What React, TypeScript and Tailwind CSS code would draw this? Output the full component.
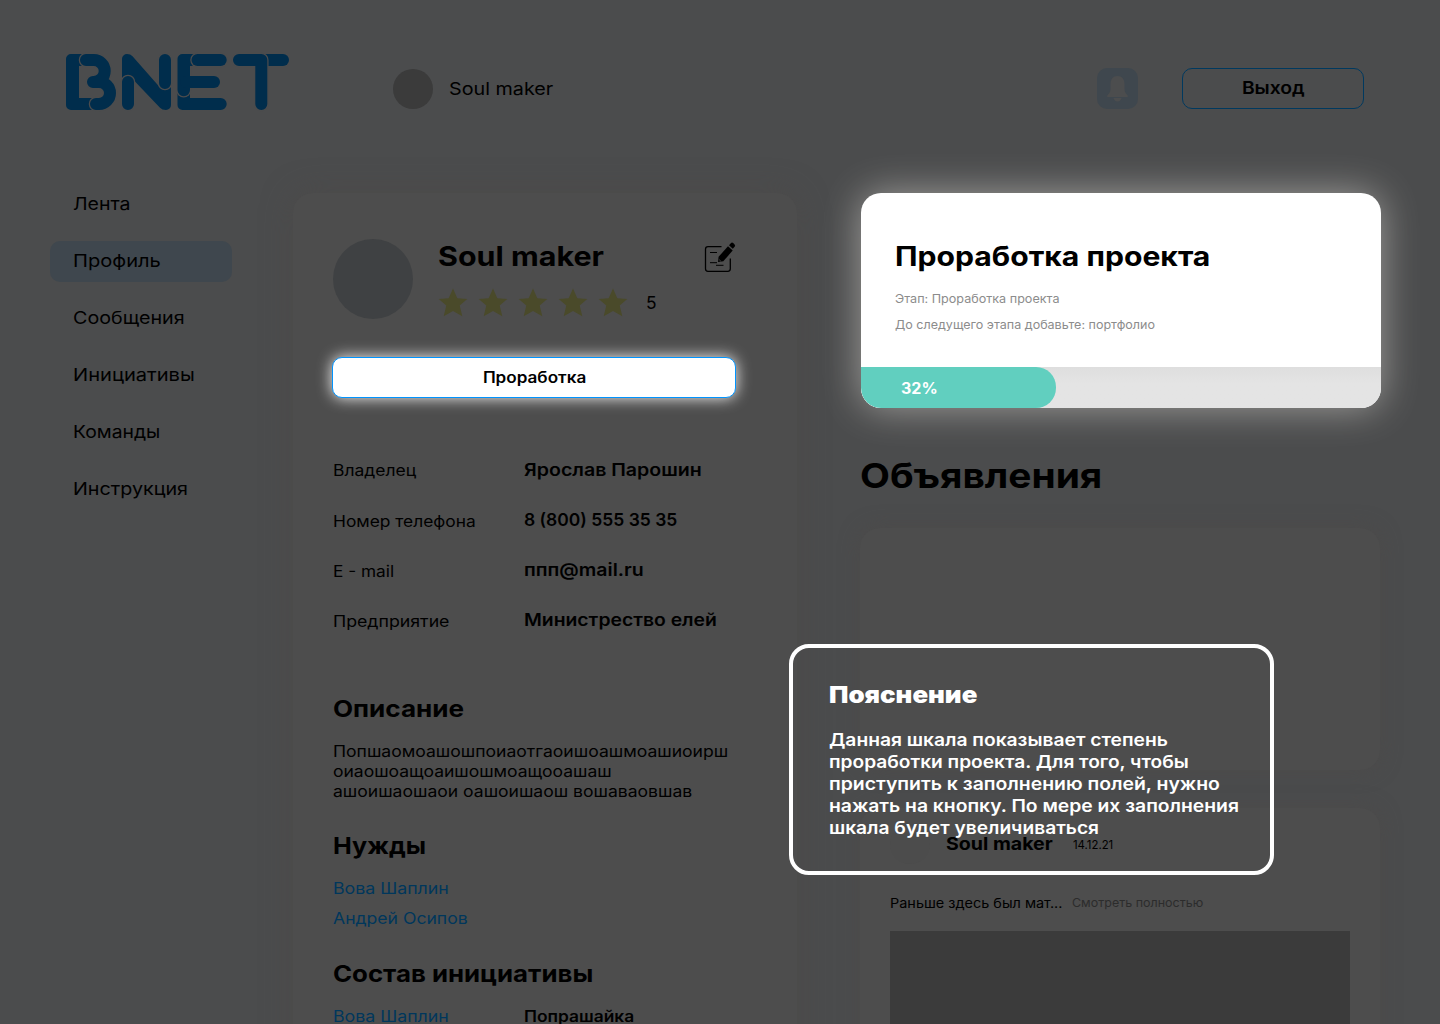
import type { ReactNode } from "react";

const INK = "#002d4c";
const PAGE = "#4b4c4d";

function Logo() {
  return (
    <svg className="block h-[60px] w-[228px]" viewBox="64 52 228 60" fill="none" strokeLinecap="round" strokeLinejoin="round">
      <path d="M71 54H84V66H79V98H96V110H71a5 5 0 0 1-5-5V59a5 5 0 0 1 5-5z" fill={INK} />
      <path d="M86 60H93.7a11 11 0 0 1 0 22H93M96 104H99a11 11 0 0 0 0-22H93" stroke={PAGE} strokeWidth="14.500" />
      <path d="M86 60H93.7a11 11 0 0 1 0 22H93M96 104H99a11 11 0 0 0 0-22H93" stroke={INK} strokeWidth="12" />

      <path d="M122 59a5 5 0 0 1 5-5q3.500 0 5.500 2.300L160 87.500L171 87V105a5 5 0 0 1-5 5q-4 0-6-2.300L134 80.500L122 82z" fill={INK} />
      <path d="M128 82V104M165 60V83" stroke={PAGE} strokeWidth="14.500" />
      <path d="M128 82V104M165 60V83" stroke={INK} strokeWidth="12" />

      <path d="M177.500 92V105a5 5 0 0 0 5 5H220.700a6 6 0 0 0 0-12H190V92z" fill={INK} />
      <path d="M183.700 62V90" stroke={PAGE} strokeWidth="15" />
      <path d="M171 54h2v56h-2z" fill="none" />
      <path d="M182.500 54H197V66H190V90a6.200 6.200 0 0 1-12.500 0V59a5 5 0 0 1 5-5z" fill={INK} />
      <path d="M186 82H214" stroke={INK} strokeWidth="12" />
      <path d="M197.500 60H220.700" stroke={PAGE} strokeWidth="14.500" />
      <path d="M197.500 60H220.700" stroke={INK} strokeWidth="12" />

      <path d="M263 60H283" stroke={INK} strokeWidth="12" />
      <path d="M239 60H261.300V104" stroke={PAGE} strokeWidth="14.500" />
      <path d="M239 60H261.300V104" stroke={INK} strokeWidth="12" />
    </svg>
  );
}

function Bell() {
  return (
    <svg className="h-[26px] w-[22px]" viewBox="0.500 1 22 26" fill="#4c4d4e">
      <path d="M11 1C6.500 1 4 4.500 4 9v5c0 3-1.500 4.500-3.200 6.600C.2 21.500.6 22 1.500 22h19c.9 0 1.300-.5.700-1.400C19.500 18.500 18 17 18 14V9c0-4.500-2.500-8-7-8z" />
      <path d="M7 23h8c-.4 2-2 3.500-4 3.500S7.400 25 7 23z" />
    </svg>
  );
}

function EditIcon() {
  return (
    <svg className="block h-8 w-8" viewBox="704 241 32 32" fill="none">
      <path d="M721.500 246.700H708a2.500 2.500 0 0 0-2.500 2.500V268.800a2.500 2.500 0 0 0 2.500 2.500H727.800a2.500 2.500 0 0 0 2.500-2.500V258.500" stroke="#000" strokeWidth="1.300" />
      <path d="M710 252.500h7M710 262.700h7M716 265.300h7.500" stroke="#000" strokeWidth="1" />
      <path d="M718.600 256.800L728 246.300L732.700 250.600L723.300 261.200L718 262z" fill="#000" />
      <path d="M729 245.200l1.800-2q1.200-1.200 2.400-.1l1.400 1.400q1.100 1.100 0 2.300l-1.800 2z" fill="#000" />
      <path d="M718.800 259.300l2.200 2" stroke="#4d4d4d" strokeWidth=".7" />
    </svg>
  );
}

function Star() {
  return (
    <svg className="h-8 w-8" viewBox="0 0 32 32" fill="#4a4a2a">
      <path d="M16 1.500L20.300 11.200L30.300 11.900L22.700 18.600L25.300 29.200L16 24L6.700 29.200L9.300 18.600L1.700 11.900L11.700 11.200z" />
    </svg>
  );
}

function Wide({ x, children }: { x: string; children: ReactNode }) {
  return <span className={`inline-block origin-left ${x}`}>{children}</span>;
}

const nav = [
  { label: "Лента", x: "scale-x-[1.12]" },
  { label: "Профиль", x: "scale-x-[1.155]", active: true },
  { label: "Сообщения", x: "scale-x-[1.132]" },
  { label: "Инициативы", x: "scale-x-[1.155]" },
  { label: "Команды", x: "scale-x-[1.11]" },
  { label: "Инструкция", x: "scale-x-[1.133]" },
];

const details = [
  { label: "Владелец", lx: "scale-x-[1.135]", value: "Ярослав Парошин", vx: "scale-x-[1.125]", pt: "pt-[2px]" },
  { label: "Номер телефона", lx: "scale-x-[1.128]", value: "8 (800) 555 35 35", vx: "scale-x-[1.005]", pt: "pt-[3px]" },
  { label: "E - mail", lx: "scale-x-[1.12]", value: "ппп@mail.ru", vx: "scale-x-[1.12]", pt: "pt-[3px]" },
  { label: "Предприятие", lx: "scale-x-[1.152]", value: "Министрество елей", vx: "scale-x-[1.112]", pt: "pt-[3px]" },
];

const hint = [
  { text: "Данная шкала показывает степень", x: "scale-x-[1.105]" },
  { text: "проработки проекта. Для того, чтобы", x: "scale-x-[1.1]" },
  { text: "приступить к заполнению полей, нужно", x: "scale-x-[1.115]" },
  { text: "нажать на кнопку. По мере их заполнения", x: "scale-x-[1.11]" },
  { text: "шкала будет увеличиваться", x: "scale-x-[1.101]" },
];

function Heading({ children, className, x }: { children: ReactNode; className: string; x: string }) {
  return (
    <h2 className={`text-[23.2px] leading-[30px] font-bold ${className}`}>
      <Wide x={x}>{children}</Wide>
    </h2>
  );
}

export default function App() {
  return (
    <div className="relative h-[1024px] w-[1440px] overflow-hidden bg-[#4b4c4d] font-['Inter',sans-serif] whitespace-nowrap text-black">
      <header className="flex h-[193px] items-start">
        <div className="mt-[52px] ml-16">
          <Logo />
        </div>
        <div className="mt-[69px] ml-[101px] flex items-center gap-[15.5px]">
          <div className="size-10 rounded-full bg-[#3b3b3b]" />
          <span className="text-[17.4px] leading-[22px] font-[420]">
            <Wide x="scale-x-[1.135]">Soul maker</Wide>
          </span>
        </div>
        <div className="mt-[68px] mr-[76px] ml-auto flex gap-11">
          <div className="flex size-[41px] items-center justify-center rounded-[10px] bg-[#3f474e]">
            <Bell />
          </div>
          <button className="h-[41px] w-[182px] rounded-[10px] border border-[#00395f] pb-px text-[17.4px] font-semibold">
            <span className="inline-block scale-x-[1.11]">Выход</span>
          </button>
        </div>
      </header>

      <div className="flex items-start">
        <nav className="-mt-[9px] ml-[50px] flex w-[182px] shrink-0 flex-col gap-4">
          {nav.map((n) => (
            <a
              key={n.label}
              className={`flex h-[41px] items-center rounded-[10px] pb-px pl-[22.5px] text-[17.4px] font-[420] ${n.active ? "bg-[#3f474e]" : ""}`}
            >
              <Wide x={n.x}>{n.label}</Wide>
            </a>
          ))}
        </nav>

        <section className="ml-[61px] h-[900px] w-[504px] shrink-0 rounded-[20px] bg-[#4d4d4d] pt-[46px] pl-10 shadow-[0_0_30px_rgba(76,73,71,0.6)]">
          <div className="flex w-[403px]">
            <div className="size-20 rounded-full bg-[#3f4143]" />
            <div className="ml-[25px] w-[230px]">
              <h1 className="pt-px text-[27px] leading-[33px] font-bold">
                <Wide x="scale-x-[1.127]">Soul maker</Wide>
              </h1>
              <div className="mt-[14px] -ml-px flex items-center gap-2">
                {[0, 1, 2, 3, 4].map((i) => (
                  <Star key={i} />
                ))}
                <span className="ml-[9px] text-[17.4px] leading-8">5</span>
              </div>
            </div>
            <div className="mt-[2px] ml-auto">
              <EditIcon />
            </div>
          </div>

          <button className="relative mt-[38px] -ml-px block h-[41px] w-[404px] rounded-[10px] border border-[#0094ff] bg-white pl-px text-[15.4px] font-semibold shadow-[0_0_15px_rgba(255,255,255,0.95)]">
            <span className="inline-block scale-x-[1.11]">Проработка</span>
          </button>

          <dl className="mt-[61px] flex flex-col gap-7">
            {details.map((d) => (
              <div key={d.label} className="flex h-[22px]">
                <dt className={`w-[191px] text-[15.4px] leading-5 font-[420] ${d.pt}`}>
                  <Wide x={d.lx}>{d.label}</Wide>
                </dt>
                <dd className="text-[17.4px] leading-[22px] font-semibold">
                  <Wide x={d.vx}>{d.value}</Wide>
                </dd>
              </div>
            ))}
          </dl>

          <Heading className="mt-[63px]" x="scale-x-[1.125]">Описание</Heading>
          <div className="mt-[18px] text-[15.4px] leading-5 font-[420]">
            <p><Wide x="scale-x-[1.141]">Попшаомоашошпоиаотгаоишоашмоашиоирш</Wide></p>
            <p><Wide x="scale-x-[1.137]">оиаошоащоаишошмоащооашаш</Wide></p>
            <p><Wide x="scale-x-[1.14]">ашоишаошаои оашоишаош вошаваовшав</Wide></p>
          </div>

          <Heading className="mt-[29px]" x="scale-x-[1.085]">Нужды</Heading>
          <div className="mt-[18px] flex flex-col gap-[10px] text-[15.4px] leading-5 font-[420] text-[#00375c]">
            <a><Wide x="scale-x-[1.153]">Вова Шаплин</Wide></a>
            <a><Wide x="scale-x-[1.143]">Андрей Осипов</Wide></a>
          </div>

          <Heading className="mt-[30px]" x="scale-x-[1.113]">Состав инициативы</Heading>
          <div className="mt-[18px] flex text-[15.4px] leading-5">
            <a className="w-[191px] font-[420] text-[#00375c]">
              <Wide x="scale-x-[1.153]">Вова Шаплин</Wide>
            </a>
            <span className="font-semibold">
              <Wide x="scale-x-[1.128]">Попрашайка</Wide>
            </span>
          </div>
        </section>

        <div className="ml-[63px] w-[520px] shrink-0">
          <section className="relative ml-px h-[215px] w-[520px] rounded-[20px] bg-white pt-[46px] shadow-[0_0_38px_rgba(255,250,245,0.48)]">
            <div className="pl-[34px]">
              <h2 className="pt-px text-[27px] leading-[33px] font-bold">
                <Wide x="scale-x-[1.116]">Проработка проекта</Wide>
              </h2>
              <p className="mt-[18px] text-[11.6px] leading-4 text-[#8c8c8c]">
                <Wide x="scale-x-[1.086]">Этап: Проработка проекта</Wide>
              </p>
              <p className="mt-[10px] text-[11.6px] leading-4 text-[#8c8c8c]">
                <Wide x="scale-x-[1.081]">До следущего этапа добавьте: портфолио</Wide>
              </p>
            </div>
            <div className="mt-[34px] h-[41px] overflow-hidden rounded-b-[20px] bg-linear-to-b from-[#dedede] to-[#e4e4e4] to-40%">
              <div className="flex h-full w-[195px] items-center rounded-r-[20px] rounded-bl-[20px] bg-[#61cfbf] pt-[2px] pl-10 text-[15.4px] font-bold text-white">
                <Wide x="scale-x-[1.04]">32%</Wide>
              </div>
            </div>
          </section>

          <h2 className="mt-[45px] mb-[31px] text-[34.7px] leading-[44px] font-bold">
            <Wide x="scale-x-[1.12]">Объявления</Wide>
          </h2>

          <section className="h-[242px] rounded-[20px] bg-[#4d4d4d] shadow-[0_0_20px_rgba(76,73,71,0.6)]" />

          <section className="mt-[38px] h-[300px] rounded-[20px] bg-[#4d4d4d] px-[30px] pt-4 shadow-[0_0_20px_rgba(76,73,71,0.6)]">
            <div className="flex items-center">
              <div className="size-10 rounded-full bg-[#4c4c4c]" />
              <span className="ml-4 w-[127px] text-[17.4px] leading-[22px] font-bold">
                <Wide x="scale-x-[1.125]">Soul maker</Wide>
              </span>
              <span className="pt-[2px] text-[11.6px] leading-4">
                <Wide x="scale-x-[0.98]">14.12.21</Wide>
              </span>
            </div>
            <div className="mt-[29px] flex h-5 items-center">
              <span className="w-[182px] text-[13.5px]">
                <Wide x="scale-x-[1.07]">Раньше здесь был мат...</Wide>
              </span>
              <span className="pt-px text-[11.6px] text-[#2c2c2c]">
                <Wide x="scale-x-[1.077]">Смотреть полностью</Wide>
              </span>
            </div>
            <div className="mt-[18px] h-[200px] bg-[#3b3b3b]" />
          </section>
        </div>
      </div>

      <aside className="absolute top-[644px] left-[789px] h-[231px] w-[485px] rounded-[20px] border-4 border-white pt-8 pl-9 text-white">
        <h3 className="text-[23.2px] leading-[30px] font-black">
          <Wide x="scale-x-[1.115]">Пояснение</Wide>
        </h3>
        <div className="mt-[19px] text-[17.4px] leading-[22px] font-semibold">
          {hint.map((h) => (
            <p key={h.text}>
              <Wide x={h.x}>{h.text}</Wide>
            </p>
          ))}
        </div>
      </aside>
    </div>
  );
}
